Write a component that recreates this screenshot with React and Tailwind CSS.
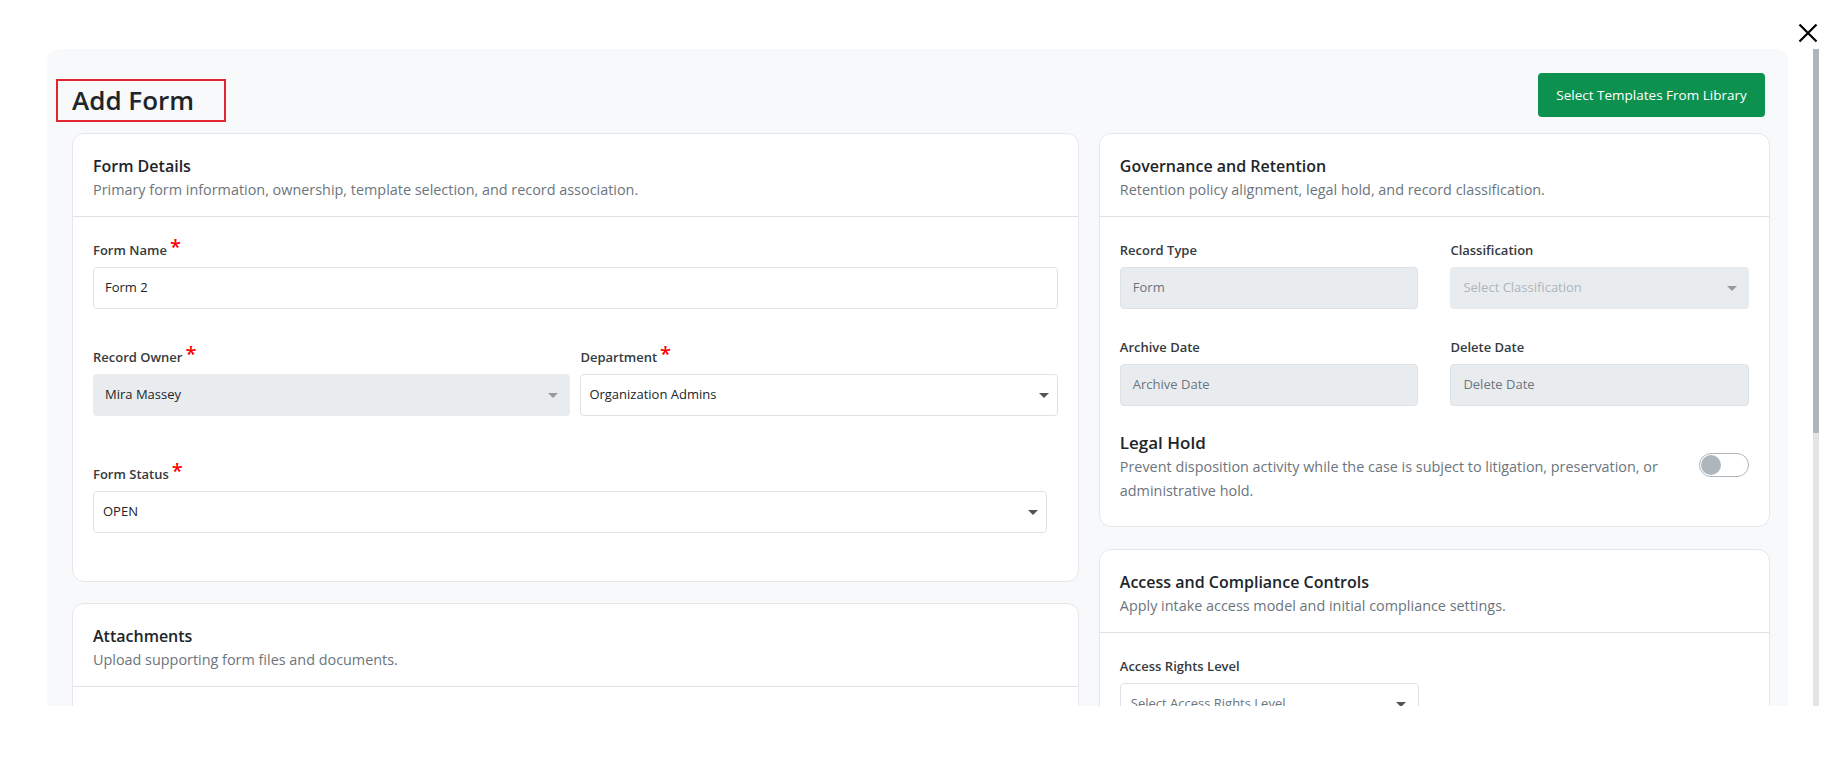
import React from 'react';

const Caret = ({ color = '#6c757d' }) => (
  <svg width="10" height="5" viewBox="0 0 10 5" className="shrink-0">
    <path d="M0 0h10L5 5z" fill={color} />
  </svg>
);

const Label = ({ children, required }) => (
  <div className="mb-[7px] h-5 whitespace-nowrap text-[13px] font-semibold leading-5 text-[#343a40]">
    {children}
    {required && <span className="relative -top-px ml-[3px] text-[20px] leading-[0] text-[#ff0000]">*</span>}
  </div>
);

const Card = ({ title, subtitle, children, bodyClass = '' }) => (
  <div className="rounded-xl border border-[#e5e7eb] bg-white">
    <div className="border-b border-[#dee2e6] px-5 pb-4 pt-5">
      <h3 className="text-[16px] font-semibold leading-6 text-[#212529]">{title}</h3>
      <p className="mt-0.5 text-[14.4px] leading-5 text-[#6c757d]">{subtitle}</p>
    </div>
    <div className={`px-5 pt-[23px] ${bodyClass}`}>{children}</div>
  </div>
);

export default function App() {
  return (
    <div className="relative h-[779px] w-full overflow-hidden bg-white font-[family-name:'Open_Sans',sans-serif]">
      <button className="absolute right-[25px] top-[23px] h-5 w-5">
        <svg viewBox="0 0 20 20" width="20" height="20">
          <path d="M1.5 1.5l17 17M18.5 1.5l-17 17" stroke="#000" strokeWidth="2.2" />
        </svg>
      </button>

      <div className="flex pl-[47px] pt-[49px]">
        <div className="h-[657px] w-[1741px] overflow-hidden rounded-t-xl bg-[#f8f9fa] pl-[25px] pr-[18px]">
          <div className="flex items-start justify-between pt-6">
            <div className="-ml-4 mt-[6px] flex h-[43px] items-center border-2 border-[#e3262b] pl-[14px] pr-[30px]">
              <h1 className="text-[26px] font-semibold text-[#212529]">Add Form</h1>
            </div>
            <button className="mr-[5px] h-[44px] w-[227px] rounded bg-[#0c914f] text-[13.5px] font-medium text-white">
              Select Templates From Library
            </button>
          </div>

          <div className="mt-[11px] grid grid-cols-[3fr_2fr] items-start gap-5">
            <div className="flex flex-col gap-[21px]">
              <Card
                title="Form Details"
                subtitle="Primary form information, ownership, template selection, and record association."
                bodyClass="pb-12"
              >
                <Label required>Form Name</Label>
                <div className="mb-[38px] flex h-[42px] items-center rounded border border-[#dee2e6] bg-white pl-[11px] text-[13px] text-[#212529]">
                  Form 2
                </div>

                <div className="mb-[48px] grid grid-cols-2 gap-[10px]">
                  <div>
                    <Label required>Record Owner</Label>
                    <div className="flex h-[42px] items-center justify-between rounded bg-[#e9ecef] pl-3 pr-3 text-[13px] text-[#212529]">
                      Mira Massey
                      <Caret color="#999" />
                    </div>
                  </div>
                  <div>
                    <Label required>Department</Label>
                    <div className="flex h-[42px] items-center justify-between rounded border border-[#dee2e6] bg-white pl-[8px] pr-2 text-[13px] text-[#212529]">
                      Organization Admins
                      <Caret color="#555" />
                    </div>
                  </div>
                </div>

                <Label required>Form Status</Label>
                <div className="mr-[11px] flex h-[42px] items-center justify-between rounded border border-[#dee2e6] bg-white pl-[9px] pr-2 text-[13px] text-[#212529]">
                  OPEN
                  <Caret color="#555" />
                </div>
              </Card>

              <Card title="Attachments" subtitle="Upload supporting form files and documents." bodyClass="h-[200px]" />
            </div>

            <div className="flex flex-col gap-[22px]">
              <Card
                title="Governance and Retention"
                subtitle="Retention policy alignment, legal hold, and record classification."
                bodyClass="pb-6"
              >
                <div className="grid grid-cols-2 gap-x-8 gap-y-[28px]">
                  <div>
                    <Label>Record Type</Label>
                    <div className="flex h-[42px] items-center rounded border border-[#dee2e6] bg-[#e9ecef] pl-3 text-[13px] text-[#6c757d]">
                      Form
                    </div>
                  </div>
                  <div>
                    <Label>Classification</Label>
                    <div className="flex h-[42px] items-center justify-between rounded bg-[#e9ecef] pl-[13px] pr-3 text-[13px] text-[#adb5bd]">
                      Select Classification
                      <Caret color="#999" />
                    </div>
                  </div>
                  <div>
                    <Label>Archive Date</Label>
                    <div className="flex h-[42px] items-center rounded border border-[#dee2e6] bg-[#e9ecef] pl-3 text-[13px] text-[#6c757d]">
                      Archive Date
                    </div>
                  </div>
                  <div>
                    <Label>Delete Date</Label>
                    <div className="flex h-[42px] items-center rounded border border-[#dee2e6] bg-[#e9ecef] pl-3 text-[13px] text-[#6c757d]">
                      Delete Date
                    </div>
                  </div>
                </div>

                <div className="mt-[25px] flex items-start gap-5">
                  <div className="flex-1">
                    <h4 className="text-[17px] font-semibold leading-6 text-[#212529]">Legal Hold</h4>
                    <p className="text-[14.4px] leading-[23.5px] text-[#6c757d]">
                      Prevent disposition activity while the case is subject to litigation, preservation, or administrative hold.
                    </p>
                  </div>
                  <div className="mt-[22px] flex h-6 w-[50px] items-center rounded-full border border-[#adb5bd] bg-white px-px">
                    <div className="h-5 w-5 rounded-full bg-[#adb5bd]" />
                  </div>
                </div>
              </Card>

              <Card
                title="Access and Compliance Controls"
                subtitle="Apply intake access model and initial compliance settings."
                bodyClass="h-[200px]"
              >
                <Label>Access Rights Level</Label>
                <div className="flex h-[42px] w-[299px] items-center justify-between rounded border border-[#dee2e6] bg-white pl-[10px] pr-3 text-[13px] text-[#6c757d]">
                  Select Access Rights Level
                  <Caret color="#555" />
                </div>
              </Card>
            </div>
          </div>
        </div>

        <div className="ml-[25px] flex h-[657px] w-[6px] flex-col bg-[#e3e3e3]">
          <div className="h-[384px] bg-[#adb5bd]" />
        </div>
      </div>
    </div>
  );
}
